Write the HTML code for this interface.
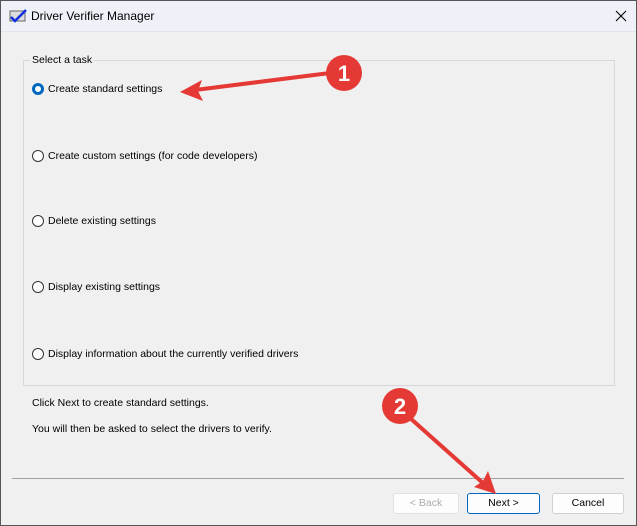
<!DOCTYPE html><html><head><style>
body{margin:0;width:637px;height:526px;overflow:hidden;background:#f0f0f0;font-family:"Liberation Sans",sans-serif;font-size:10.5px;color:#000;position:relative}
.tb{position:absolute;left:0;top:0;width:637px;height:31px;background:#eff1f8;border-bottom:1px solid #e4e4e4}
.a{position:absolute;white-space:nowrap}
.rad{position:absolute;left:32px;width:12px;height:12px;border:1px solid #333;border-radius:50%;background:#fff;box-sizing:border-box}
.btn{position:absolute;top:493px;height:21px;border:1px solid #d0d0d0;background:#fdfdfd;border-radius:3px;box-sizing:border-box;text-align:center;line-height:19px}
</style></head><body>
<div class="tb"></div>
<svg class="a" style="left:9px;top:9px" width="18" height="14"><rect x="1" y="2" width="15" height="10" fill="#ddd" stroke="#666"/><path d="M2 8 L6 12 L17 1" stroke="#1030e0" stroke-width="2.5" fill="none"/></svg>
<div class="a" style="left:31px;top:9px;font-size:12px">Driver Verifier Manager</div>
<svg class="a" style="left:615px;top:10px" width="12" height="12"><path d="M1 1L11 11M11 1L1 11" stroke="#000" stroke-width="1.1"/></svg>
<div class="a" style="left:23px;top:60px;width:592px;height:326px;border:1px solid #d8d8d8;box-sizing:border-box"></div>
<div class="a" style="left:30px;top:54px;background:#f0f0f0;padding:0 2px">Select a task</div>
<div class="rad" style="top:83px;border:3.5px solid #0067c0"></div>
<div class="a" style="left:48px;top:83px">Create standard settings</div>
<div class="rad" style="top:150px"></div><div class="a" style="left:48px;top:150px">Create custom settings (for code developers)</div>
<div class="rad" style="top:215px"></div><div class="a" style="left:48px;top:215px">Delete existing settings</div>
<div class="rad" style="top:281px"></div><div class="a" style="left:48px;top:281px">Display existing settings</div>
<div class="rad" style="top:348px"></div><div class="a" style="left:48px;top:348px">Display information about the currently verified drivers</div>
<div class="a" style="left:32px;top:397px">Click Next to create standard settings.</div>
<div class="a" style="left:32px;top:423px">You will then be asked to select the drivers to verify.</div>
<div class="a" style="left:12px;top:478px;width:612px;height:1px;background:#a0a0a0"></div>
<div class="btn" style="left:393px;width:66px;color:#aaa;border-color:#e0e0e0">&lt; Back</div>
<div class="btn" style="left:467px;width:73px;border-color:#0067c0">Next &gt;</div>
<div class="btn" style="left:552px;width:72px">Cancel</div>
<svg class="a" style="left:0;top:0" width="637" height="526">
<line x1="330" y1="73" x2="195" y2="90" stroke="#e53935" stroke-width="4"/>
<polygon points="180,92 202,80 198,91 203,101" fill="#e53935"/>
<circle cx="344" cy="73" r="18" fill="#e53935"/>
<text x="344" y="81" font-size="22" font-weight="bold" fill="#fff" text-anchor="middle" font-family="Liberation Sans">1</text>
<line x1="410" y1="418" x2="484" y2="484" stroke="#e53935" stroke-width="4"/>
<polygon points="496,494 474,487 483,481 488,471" fill="#e53935"/>
<circle cx="400" cy="406" r="18" fill="#e53935"/>
<text x="400" y="414" font-size="22" font-weight="bold" fill="#fff" text-anchor="middle" font-family="Liberation Sans">2</text>
</svg>
<div class="a" style="left:0;top:0;width:637px;height:526px;border:1px solid #555;box-sizing:border-box"></div>
</body></html>
